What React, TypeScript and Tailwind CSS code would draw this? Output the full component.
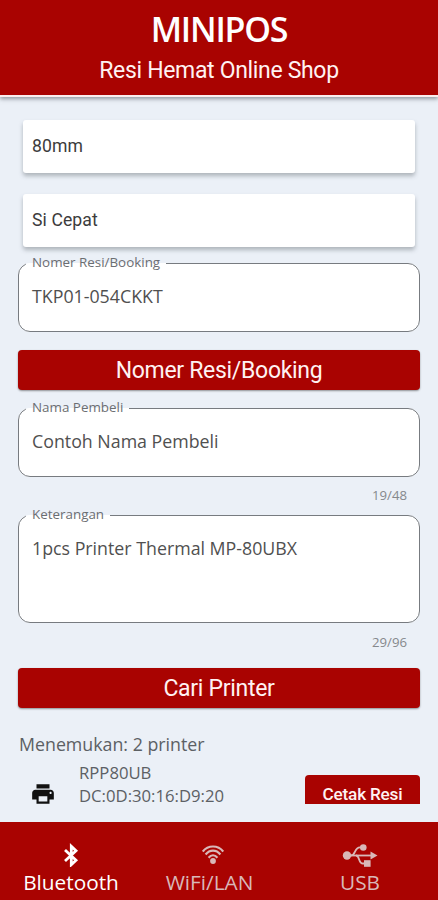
import type { ReactNode } from 'react';
import { MdPrint } from 'react-icons/md';

function SelectCard({ value }: { value: string }) {
  return (
    <div className="mx-[5px] flex h-[53px] shrink-0 items-center rounded-[3px] bg-white pl-[9px] font-[Roboto,sans-serif] text-[17.6px] tracking-[0.1px] text-[#3c3c3c] shadow-[0_3px_4px_rgba(60,70,75,0.35)]">
      {value}
    </div>
  );
}

function OutlinedField({ label, value, className }: { label: string; value: string; className: string }) {
  return (
    <fieldset className={`min-w-0 rounded-[12px] border border-[#777b80] bg-white px-[7px] ${className}`}>
      <legend className="h-[18px] px-[6px] text-[13.4px] leading-[17px] text-[#6b6e72]">{label}</legend>
      <div className="px-[6px] pt-[12px] text-[17.8px] leading-[25px] text-[#505050]">{value}</div>
    </fieldset>
  );
}

function WideButton({ children }: { children: ReactNode }) {
  return (
    <button className="flex h-[40px] w-full shrink-0 items-center justify-center rounded-[4px] bg-[#a90301] pt-[3px] font-[Roboto,sans-serif] text-[23px] tracking-[-0.3px] text-[#fff2f2] shadow-[0_1px_2px_rgba(0,0,0,0.4)]">
      {children}
    </button>
  );
}

function BluetoothIcon() {
  return (
    <svg width="16" height="24" viewBox="0 0 16 24" fill="none" stroke="currentColor" strokeWidth="2.8">
      <path d="M2 7L13 17.3L8.3 21.7V3.3L13 7.7L2 18" />
    </svg>
  );
}

function WifiIcon() {
  return (
    <svg width="22" height="20" viewBox="0 0 22 20" fill="none" stroke="currentColor" strokeWidth="2.2">
      <path d="M0.8 6.5C6 -0.2 16 -0.2 21.2 6.5" />
      <path d="M3.6 9.5C7.8 4.3 14.2 4.3 18.4 9.5" />
      <path d="M6.6 12.7C9.2 9.4 12.8 9.4 15.4 12.7" />
      <circle cx="11" cy="16" r="2.9" fill="currentColor" stroke="none" />
    </svg>
  );
}

function UsbIcon() {
  return (
    <svg width="36" height="24" viewBox="0 0 36 24" fill="none" stroke="currentColor" strokeWidth="1.8">
      <path d="M4 12.5H30" />
      <path d="M9 12.5C14 12.5 12 4.3 18 4.3H21" />
      <path d="M14 12.5C18 12.5 16 20.5 21 20.5H23" />
      <g fill="currentColor" stroke="none">
        <circle cx="5" cy="12.5" r="4.2" />
        <circle cx="21.3" cy="4.5" r="3.3" />
        <rect x="22" y="17.2" width="6.6" height="6.6" />
        <path d="M28.5 8.5L35.5 12.5L28.5 16.5Z" />
      </g>
    </svg>
  );
}

export default function App() {
  return (
    <div className="flex h-[900px] w-[438px] flex-col overflow-hidden bg-[#ebf0f7] font-['Open_Sans','Noto_Sans',sans-serif]">
      <header className="z-10 flex h-[97px] shrink-0 flex-col items-center border-b-2 border-[#fbeeee] bg-[#a90301] pt-[9px] font-[Roboto,sans-serif] text-white shadow-[0_2px_4px_rgba(60,70,75,0.5)]">
        <h1 className="font-['Open_Sans',sans-serif] text-[34px] leading-[40px] font-semibold tracking-[-1.2px]">MINIPOS</h1>
        <p className="mt-[7px] text-[23px] leading-[30px] tracking-[-0.33px] text-[#fff2f2]">Resi Hemat Online Shop</p>
      </header>

      <main className="flex h-[707px] shrink-0 flex-col overflow-hidden px-[18px] pt-[23px]">
        <SelectCard value="80mm" />
        <div className="h-[21px] shrink-0" />
        <SelectCard value="Si Cepat" />
        <OutlinedField label="Nomer Resi/Booking" value="TKP01-054CKKT" className="mt-[7px] h-[78px] shrink-0" />
        <div className="h-[18px] shrink-0" />
        <WideButton>Nomer Resi/Booking</WideButton>
        <OutlinedField label="Nama Pembeli" value="Contoh Nama Pembeli" className="mt-[9px] h-[78px] shrink-0" />
        <div className="h-[38px] shrink-0 pt-[9px] pr-[13px] text-right text-[13.2px] leading-[18px] text-[#85888c]">19/48</div>
        <OutlinedField label="Keterangan" value="1pcs Printer Thermal MP-80UBX" className="-mt-[9px] h-[117px] shrink-0" />
        <div className="h-[45px] shrink-0 pt-[10px] pr-[13px] text-right text-[13.2px] leading-[18px] text-[#85888c]">29/96</div>
        <WideButton>Cari Printer</WideButton>
        <div className="mt-[24px] shrink-0 pl-px text-[17.8px] leading-[25px] text-[#5c6064]">Menemukan: 2 printer</div>
        <div className="flex h-[60px] shrink-0 pt-[4px]">
          <MdPrint className="mt-[20px] ml-[12px] size-[26px] text-[#111]" />
          <div className="ml-[23px] text-[16.7px] leading-[23px] text-[#5c6064]">
            <div>RPP80UB</div>
            <div className="mt-[4px] leading-[15px]">DC:0D:30:16:D9:20</div>
          </div>
          <button className="mt-[14px] ml-auto flex h-[39px] w-[115px] shrink-0 items-center justify-center rounded-[4px] bg-[#a90301] font-[Roboto,sans-serif] text-[17.2px] font-medium tracking-[-0.2px] text-[#fff2f2]">
            Cetak Resi
          </button>
        </div>
      </main>

      <nav className="mt-[18px] flex h-[78px] shrink-0 bg-[#a90301] px-[1px] pt-[21px] text-[20.8px] leading-[26px] text-[#d9b8b8]">
        <div className="flex w-[140px] shrink-0 flex-col items-center text-white">
          <BluetoothIcon />
          <span className="mt-[2px] font-medium">Bluetooth</span>
        </div>
        <div className="flex w-[137px] shrink-0 flex-col items-center">
          <div className="flex h-[24px] items-center pl-[7px]"><WifiIcon /></div>
          <span className="mt-[2px]">WiFi/LAN</span>
        </div>
        <div className="flex w-[164px] shrink-0 flex-col items-center">
          <UsbIcon />
          <span className="mt-[2px]">USB</span>
        </div>
      </nav>
    </div>
  );
}
